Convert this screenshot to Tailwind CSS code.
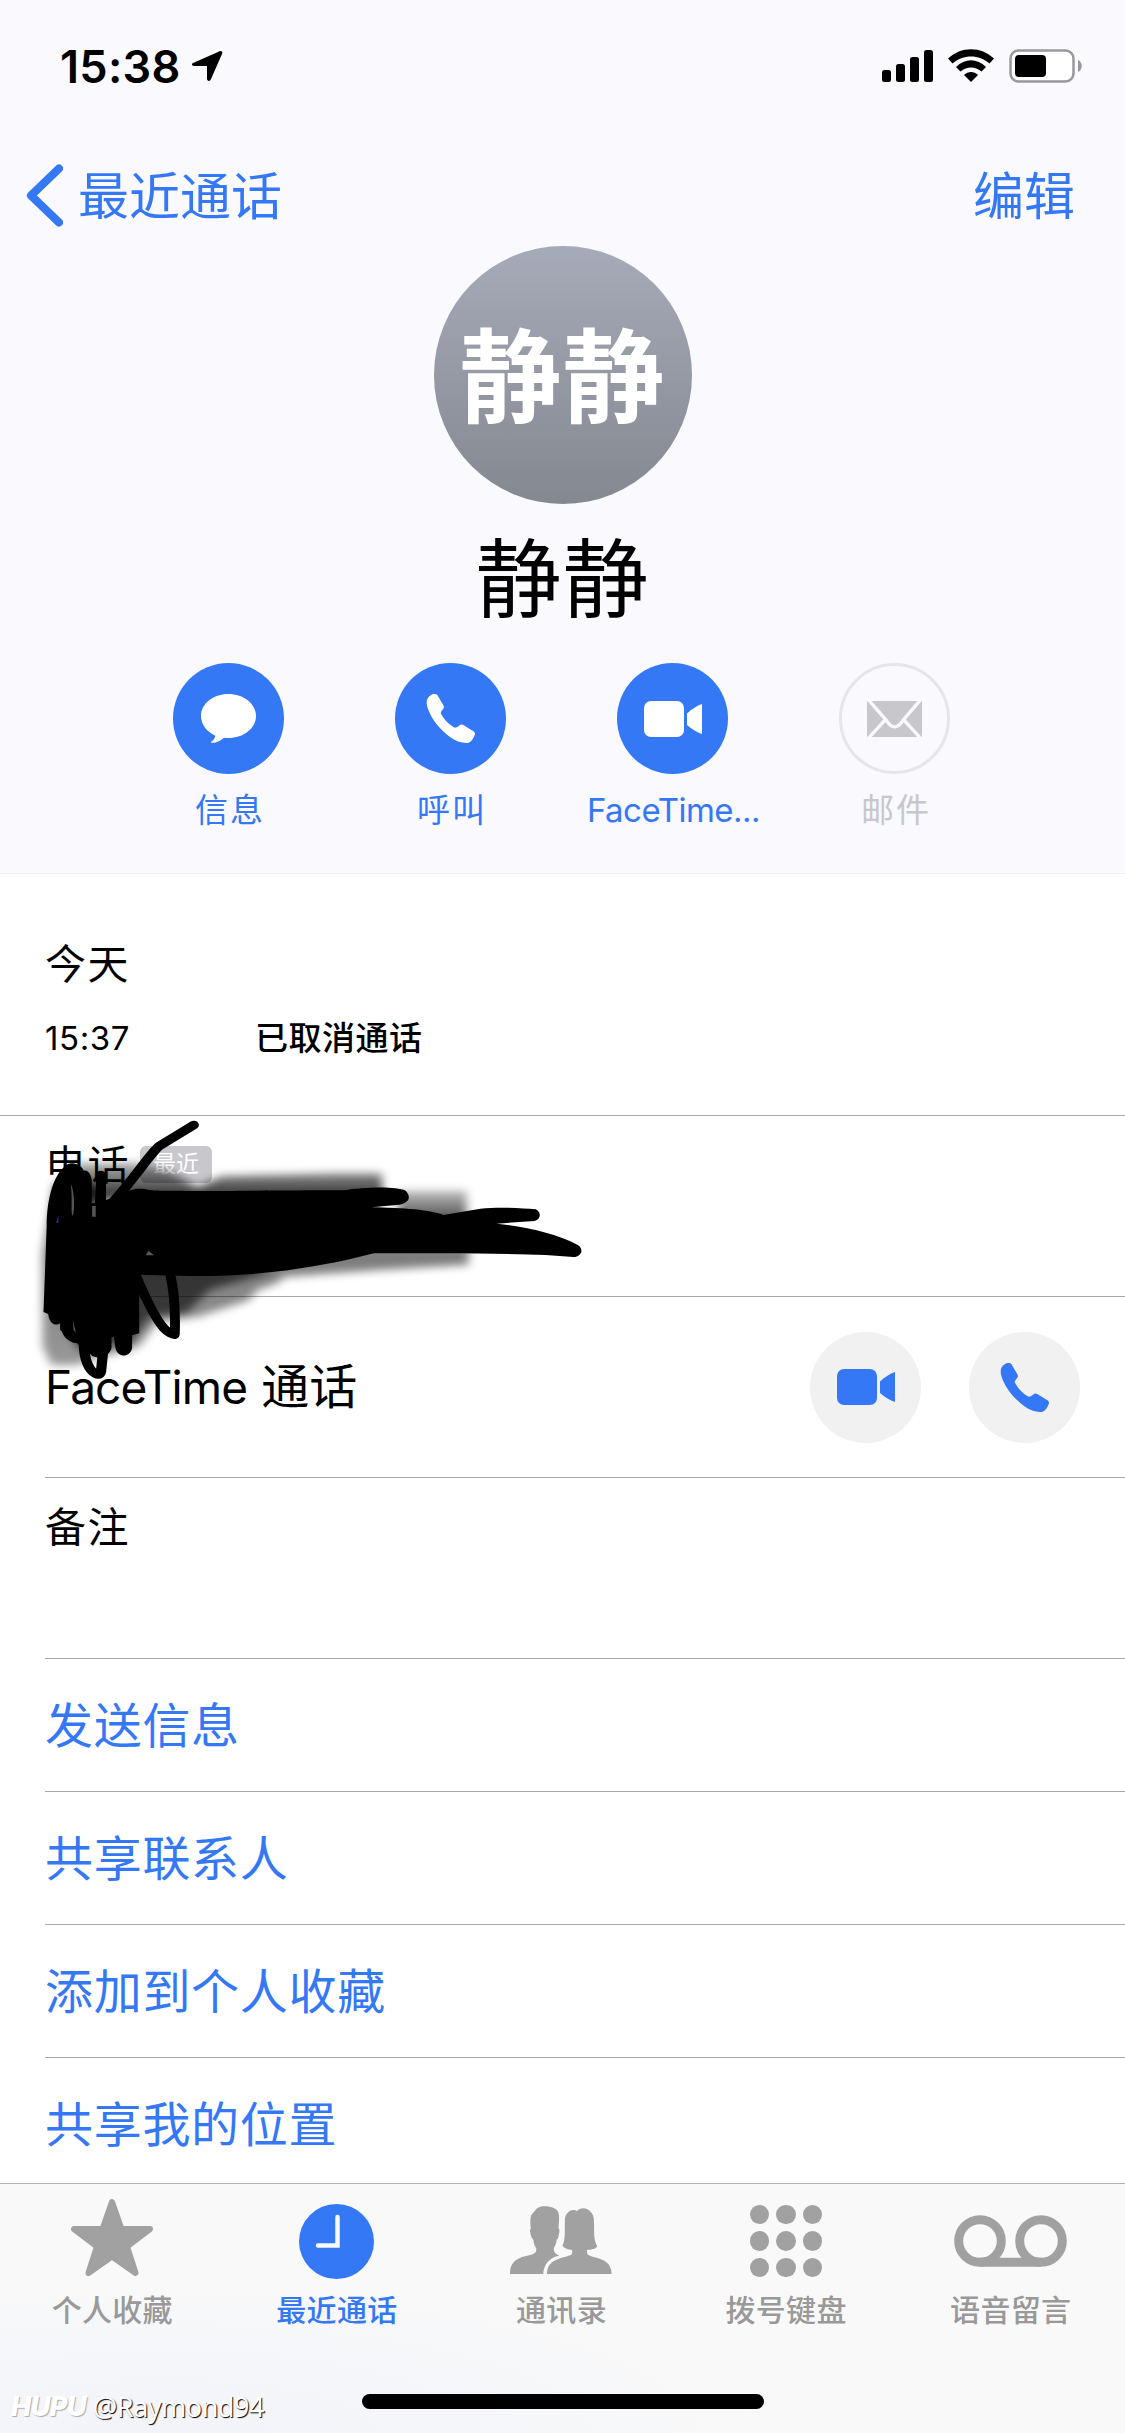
<!DOCTYPE html>
<html lang="zh-CN">
<head>
    <meta charset="UTF-8">
    <meta name="viewport" content="width=device-width, initial-scale=1.0">
    <title>静静</title>
    <script src="https://cdn.jsdelivr.net/npm/@tailwindcss/browser@4"></script>
</head>
<body class="bg-white">
<div class="relative w-[1125px] h-[2433px] overflow-hidden flex flex-col bg-white text-black font-['Inter','Noto_Sans_CJK_SC',sans-serif]">

    <!-- icons used more than once -->
    <svg class="hidden">
        <symbol id="video" viewBox="0 0 58 36">
            <rect width="40" height="36" rx="7"/>
            <path d="M43 12.500C48 8 53 4.500 58 3V33C53 31.500 48 28 43 24Z"/>
        </symbol>
        <symbol id="phone" viewBox="0 0 147 147">
            <path d="M14 4C20 0 29-2 34 3L52 34C55 39 54 42 51 45C48 49 45 53 44 58C53 75 68 92 86 101C91 101 95 98 99 95C104 91 108 91 113 94L141 111C147 114 148 119 146 124C142 133 137 143 128 146C113 149 91 143 71 128C43 107 20 79 8 50C2 35-4 15 14 4Z"/>
        </symbol>
    </svg>

    <header class="h-[874px] shrink-0 flex flex-col bg-[#f9f9fe] border-b border-[#efeff4]">
        <!-- status bar -->
        <div class="h-[132px] flex justify-between items-start pt-[49px] pl-[60px] pr-[43px]">
            <div class="flex items-start gap-[11px]">
                <span class="text-[45px] leading-[36px] font-semibold tracking-[0.300px]">15:38</span>
                <svg class="w-[31px] h-[30px] mt-[2px]" viewBox="0 0 31 30"><path d="M28 0C30 0 31 1 30 3L19 28C18 31 15 30 15 28V15H2C0 15-1 13 1 12L26 1Z"/></svg>
            </div>
            <div class="flex items-start">
                <svg class="w-[51px] h-[32px] mt-[1px]" viewBox="0 0 51 32">
                    <rect y="20" width="9" height="12" rx="2.500"/>
                    <rect x="14" y="14" width="9" height="18" rx="2.500"/>
                    <rect x="28" y="7" width="9" height="25" rx="2.500"/>
                    <rect x="42" width="9" height="32" rx="2.500"/>
                </svg>
                <svg class="w-[46px] h-[33px] ml-[15px]" viewBox="0 0 46 33">
                    <path d="M0 9.500C13-3 33-3 46 9.500L41.500 14.500C31 5 15 5 4.500 14.500Z"/>
                    <path d="M8 18C17 9 29 9 38 18L33.500 22.500C27 17 19 17 12.500 22.500Z"/>
                    <path d="M16 26C20 22 26 22 30 26L23 33Z"/>
                </svg>
                <svg class="w-[73px] h-[34px] ml-[15px]" viewBox="0 0 73 34">
                    <rect x="1.500" y="1.500" width="63" height="31" rx="8" fill="#fff" stroke="#98989d" stroke-width="2.500"/>
                    <rect x="6" y="6" width="31" height="22" rx="4"/>
                    <path d="M69 11C74 13 74 21 69 23Z" fill="#98989d"/>
                </svg>
            </div>
        </div>

        <!-- nav -->
        <nav class="h-[114px] pt-[12px] pl-[26px] pr-[50px] flex items-center justify-between text-[51px] leading-[60px] text-[#3478f6]">
            <div class="flex items-center">
                <svg class="w-[37px] h-[63px] mr-[15px]" viewBox="0 0 37 63" fill="none" stroke="#3478f6" stroke-width="8" stroke-linecap="round" stroke-linejoin="round"><path d="M33 4.500L5 31.500L33 58.500"/></svg>
                <span class="pt-[3px]">最近通话</span>
            </div>
            <span class="pt-[3px]">编辑</span>
        </nav>

        <!-- contact -->
        <div class="flex flex-col items-center">
            <div class="size-[258px] pt-[6px] rounded-full bg-gradient-to-b from-[#a6abb9] to-[#848890] flex items-center justify-center text-[102px] leading-none font-bold text-white"><span class="tracking-[1px]">静静</span></div>
            <h1 class="mt-[26px] text-[86px] leading-[100px] tracking-[1px]">静静</h1>
        </div>

        <div class="mt-[33px] mr-[3px] flex justify-center text-[33px] leading-[48px] text-[#3478f6]">
            <div class="w-[222px] flex flex-col items-center gap-[12px]">
                <div class="size-[111px] rounded-full bg-[#3478f6] flex items-center justify-center">
                    <svg class="w-[55px] h-[49px]" viewBox="0 0 165 147" fill="#fff"><path d="M82 0C128 0 165 29 165 66C165 103 128 132 82 132C77 132 73 131 69 131C59 139 45 148 31 146C29 146 29 144 31 143C38 138 42 131 43 125C17 113 0 91 0 66C0 29 37 0 82 0Z"/></svg>
                </div>
                <span class="tracking-[2px] pl-[4px]">信息</span>
            </div>
            <div class="w-[222px] flex flex-col items-center gap-[12px]">
                <div class="size-[111px] rounded-full bg-[#3478f6] flex items-center justify-center">
                    <svg class="size-[49px]" fill="#fff"><use href="#phone"/></svg>
                </div>
                <span class="tracking-[2px] pl-[4px]">呼叫</span>
            </div>
            <div class="w-[222px] flex flex-col items-center gap-[12px]">
                <div class="size-[111px] rounded-full bg-[#3478f6] flex items-center justify-center">
                    <svg class="w-[58px] h-[36px] ml-[2px] mt-[1px]" fill="#fff"><use href="#video"/></svg>
                </div>
                <span class="tracking-[-0.500px] pl-[3px]">FaceTime...</span>
            </div>
            <div class="w-[222px] flex flex-col items-center gap-[12px] text-[#c7c7cc]">
                <div class="size-[111px] rounded-full border-[3px] border-[#e5e5ea] flex items-center justify-center">
                    <svg class="w-[55px] h-[36px]" viewBox="0 0 165 108">
                        <rect width="165" height="108" fill="#c7c7cc"/>
                        <path d="M4-4L58 58C74 84 92 84 108 58L161-4M4 112L56 55M161 112L109 55" fill="none" stroke="#f9f9fe" stroke-width="10"/>
                    </svg>
                </div>
                <span class="tracking-[2px] pl-[4px]">邮件</span>
            </div>
        </div>
    </header>

    <main class="h-[1309px] shrink-0 overflow-hidden flex flex-col">
        <section class="h-[242px] shrink-0 pl-[45px] pt-[65px] border-b border-[#aaa]">
            <div class="text-[41px] leading-[50px] tracking-[1.500px]">今天</div>
            <div class="mt-[25px] flex text-[33px] leading-[48px]">
                <span class="w-[210px] tracking-[0.600px]">15:37</span>
                <span class="font-medium tracking-[0.500px]">已取消通话</span>
            </div>
        </section>

        <div class="pl-[45px]">
            <div class="h-[181px] border-b border-[#aaa] pt-[24px] flex items-start">
                <span class="text-[41px] leading-[50px] tracking-[1.500px]">电话</span>
                <span class="ml-[10px] mt-[6px] w-[72px] h-[37px] rounded-[6px] bg-[#c7c7cc] text-white text-[23px] leading-[37px] text-center">最近</span>
            </div>
            <div class="h-[181px] border-b border-[#aaa] pr-[45px] flex items-center">
                <span class="flex-1 text-[48px] leading-[60px]"><span class="text-[46px] tracking-[-0.900px]">FaceTime</span><span class="ml-[14px]">通话</span></span>
                <div class="size-[111px] rounded-full bg-[#f1f1f2] flex items-center justify-center">
                    <svg class="w-[58px] h-[36px]" fill="#3478f6"><use href="#video"/></svg>
                </div>
                <div class="ml-[48px] size-[111px] rounded-full bg-[#f1f1f2] flex items-center justify-center">
                    <svg class="size-[49px]" fill="#3478f6"><use href="#phone"/></svg>
                </div>
            </div>
            <div class="h-[181px] border-b border-[#aaa] pt-[24px] text-[41px] leading-[50px] tracking-[1.500px]">备注</div>
            <div class="flex flex-col text-[48px] leading-[60px] tracking-[0.700px] text-[#3478f6]">
                <div class="h-[133px] border-b border-[#aaa] pt-[2px] flex items-center">发送信息</div>
                <div class="h-[133px] border-b border-[#aaa] pt-[2px] flex items-center">共享联系人</div>
                <div class="h-[133px] border-b border-[#aaa] pt-[2px] flex items-center">添加到个人收藏</div>
                <div class="h-[133px] pt-[1px] flex items-center">共享我的位置</div>
            </div>
        </div>
    </main>

    <!-- tab bar -->
    <footer class="h-[250px] shrink-0 border-t border-[#b2b2b2] bg-[#f9f9f9] bg-[radial-gradient(ellipse_at_15%_100%,#f2f4fa,#f9f9f9_45%)] flex flex-col items-center text-[#999]">
        <div class="grid grid-cols-5 w-full pr-[2px] text-[30px] leading-[40px] tracking-[0.300px] font-medium text-center">
            <div>
                <div class="h-[106px] flex items-end justify-center pb-[14px]">
                    <svg class="w-[82px] h-[77px]" viewBox="0 0 82 77" fill="#a1a1a1" stroke="#a1a1a1" stroke-width="6" stroke-linejoin="round"><path d="M41 3L50.500 30H79L56 47.500L64.500 74L41 57.500L17.500 74L26 47.500L3 30H31.500Z"/></svg>
                </div>
                个人收藏
            </div>
            <div class="text-[#3478f6]">
                <div class="h-[106px] flex items-end justify-center pb-[11px]">
                    <svg class="size-[75px]" viewBox="0 0 75 75"><circle cx="37.500" cy="37.500" r="37.500" fill="#3478f6"/><path d="M38.500 13V41.500H19" fill="none" stroke="#f9f9f9" stroke-width="4.500" stroke-linecap="round"/></svg>
                </div>
                最近通话
            </div>
            <div>
                <div class="h-[106px] flex items-end justify-center pb-[16px]">
                    <svg class="w-[102px] h-[68px]" viewBox="0 0 249 204" preserveAspectRatio="none" fill="#a1a1a1">
                        <path d="M0 204C0 172 12 158 39 150C55 146 64 142 64 132V126C59 119 58 110 57 101C52 97 50 86 49 75C48 71 50 68 51 68C49 49 48 25 57 20C64 8 70 1 82 1C98 0 116 6 119 23C121 40 119 55 118 67C122 69 121 78 119 87C118 95 117 99 114 101C113 112 110 120 107 126V132C108 140 112 145 120 149C98 154 83 172 81 204Z"/>
                        <path d="M90 204C90 173 106 160 136 152C147 149 152 146 152 139V132C142 132 130 126 128 118C136 106 133 65 134 43C134 25 143 12 156 12C160 12 162 14 163 16C167 10 172 7 179 7C192 7 205 22 205 44C206 76 203 99 213 121C211 128 200 132 188 132V139C188 146 193 150 204 153C231 160 248 174 248 204Z"/>
                    </svg>
                </div>
                通讯录
            </div>
            <div>
                <div class="h-[106px] flex items-end justify-center pb-[13px]">
                    <div class="grid grid-cols-3 gap-x-[7px] gap-y-[7px]">
                        <i class="size-[19.500px] rounded-full bg-[#a1a1a1]"></i><i class="size-[19.500px] rounded-full bg-[#a1a1a1]"></i><i class="size-[19.500px] rounded-full bg-[#a1a1a1]"></i>
                        <i class="size-[19.500px] rounded-full bg-[#a1a1a1]"></i><i class="size-[19.500px] rounded-full bg-[#a1a1a1]"></i><i class="size-[19.500px] rounded-full bg-[#a1a1a1]"></i>
                        <i class="size-[19.500px] rounded-full bg-[#a1a1a1]"></i><i class="size-[19.500px] rounded-full bg-[#a1a1a1]"></i><i class="size-[19.500px] rounded-full bg-[#a1a1a1]"></i>
                    </div>
                </div>
                拨号键盘
            </div>
            <div>
                <div class="h-[106px] flex items-end justify-center pb-[23px]">
                    <svg class="w-[113px] h-[52px]" viewBox="0 0 113 52" fill="none" stroke="#a1a1a1" stroke-width="9"><circle cx="26" cy="26" r="21.300"/><circle cx="87" cy="26" r="21.300"/><path d="M26 47.300H87"/></svg>
                </div>
                语音留言
            </div>
        </div>
        <div class="mt-[64px] w-[402px] h-[15px] rounded-full bg-black"></div>
    </footer>

    <!-- scribble over the phone number -->
    <svg class="absolute left-0 top-[1100px] w-[620px] h-[340px]" viewBox="0 0 1568 1020" preserveAspectRatio="none">
        <defs>
            <filter id="soft" x="-10%" y="-10%" width="120%" height="120%"><feGaussianBlur stdDeviation="12"/></filter>
            <linearGradient id="down" x1="0" y1="0" x2="0" y2="1"><stop offset="0" stop-opacity=".3"/><stop offset="1" stop-opacity=".85"/></linearGradient>
            <linearGradient id="right" x1="0" y1="0" x2="0" y2="1"><stop offset="0" stop-opacity=".25"/><stop offset="1" stop-opacity=".8"/></linearGradient>
            <linearGradient id="up" x1="0" y1="0" x2="0" y2="1"><stop offset="0" stop-opacity=".85"/><stop offset=".2" stop-opacity=".55"/><stop offset="1" stop-opacity=".4"/></linearGradient>
        </defs>
        <g filter="url(#soft)">
            <path d="M190 190L350 188L430 215L500 262L560 228L850 220L965 220L970 300H190Z" fill="url(#down)"/>
            <path d="M1010 272H1180V380H1000Z" fill="url(#right)"/>
            <path d="M900 440H1185V494L960 510L720 530L700 550L650 570L630 600L500 650L400 665L350 740L260 770L190 795H130L108 740V460L140 250L240 250L300 500Z" fill="url(#up)"/>
            <path d="M300 480L700 510L530 570L470 640L380 650L330 730L200 750L150 640Z" opacity=".6"/>
        </g>
        <path d="M118 380C118 290 138 215 172 192C190 184 208 200 212 212C222 208 230 222 232 240V310H240L244 220C250 208 264 212 268 222V300L290 290C340 262 350 264 378 270C390 276 760 270 870 271C920 262 1000 258 1026 272C1040 290 1036 308 1010 314L940 322C1020 323 1090 330 1122 345L1215 326C1260 320 1320 324 1355 328C1370 338 1368 358 1352 363L1256 371C1330 380 1410 402 1460 434C1478 446 1472 470 1450 471L1380 465C1260 460 1100 460 946 460C800 505 650 530 480 528L352 524V700L334 706V745C328 774 298 774 292 745L288 710L282 712V745C276 770 250 778 234 768L200 735L152 690V670C140 680 124 670 122 642L110 636Z"/>
        <g fill="none" stroke="#000" stroke-width="26" stroke-linecap="round" stroke-linejoin="round">
            <path d="M490 75L404 137C380 160 350 220 290 300"/>
            <path d="M345 530C370 600 395 660 415 685C425 698 438 706 442 704C444 640 440 570 430 520" stroke-width="25"/>
            <path d="M212 730C212 780 226 810 240 820C252 828 256 820 256 808L262 740"/>
            <path d="M168 660C164 690 174 708 190 716"/>
        </g>
        <path d="M179 252C188 270 190 330 184 348C178 340 184 300 179 252Z" fill="#555"/>
        <path d="M233 318H242V350H233ZM376 452L390 466H368ZM184 660L192 698L186 690Z" fill="#555"/>
        <path d="M148 345V368L142 370Z" fill="#123a8c"/>
    </svg>

    <!-- watermark -->
    <div class="absolute left-[11px] top-[2387px] flex items-center h-[40px] text-white whitespace-nowrap">
        <span class="text-[27px] font-extrabold italic tracking-[-0.500px] [text-shadow:1px_1px_1px_#aaa]">HUPU</span>
        <span class="ml-[7px] text-[27px] tracking-[-0.500px] font-['Noto_Sans'] [text-shadow:1px_1px_1px_#000]">@Raymond94</span>
    </div>
</div>
</body>
</html>
